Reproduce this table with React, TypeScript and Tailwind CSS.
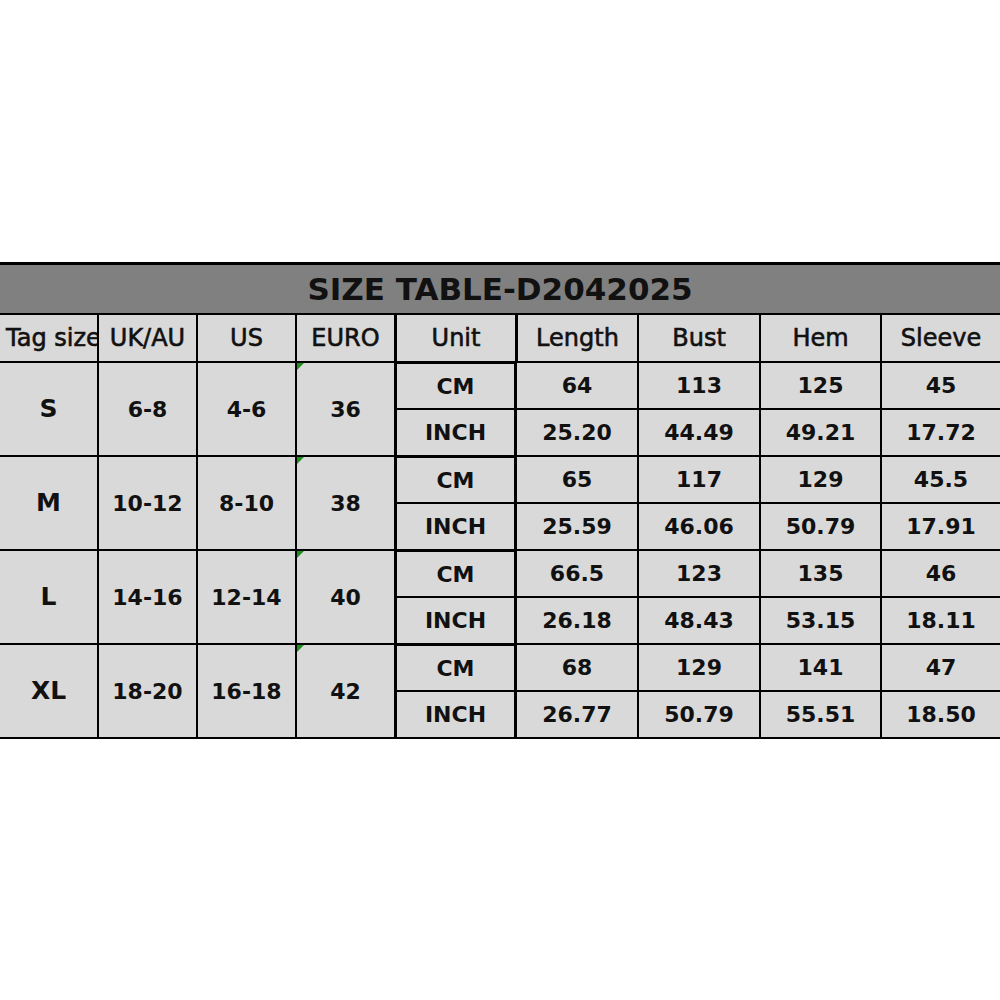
const groups = [
  { tag: "S", uk: "6-8", us: "4-6", euro: "36", cm: ["64", "113", "125", "45"], inch: ["25.20", "44.49", "49.21", "17.72"] },
  { tag: "M", uk: "10-12", us: "8-10", euro: "38", cm: ["65", "117", "129", "45.5"], inch: ["25.59", "46.06", "50.79", "17.91"] },
  { tag: "L", uk: "14-16", us: "12-14", euro: "40", cm: ["66.5", "123", "135", "46"], inch: ["26.18", "48.43", "53.15", "18.11"] },
  { tag: "XL", uk: "18-20", us: "16-18", euro: "42", cm: ["68", "129", "141", "47"], inch: ["26.77", "50.79", "55.51", "18.50"] },
]

const headers = ["UK/AU", "US", "EURO", "Unit", "Length", "Bust", "Hem", "Sleeve"]

const cell = "bg-[#d9d9d9] flex items-center justify-center text-[#111] whitespace-nowrap overflow-hidden"
const num = "font-bold text-[22px] font-['DejaVu_Sans',sans-serif]"
const head = "text-[24px] font-['DejaVu_Sans',sans-serif] [-webkit-text-stroke:0.6px_#111]"

export default function App() {
  return (
    <div className="min-h-[1000px] w-[1000px] bg-white pt-[262px]">
      <div className="grid grid-cols-[97px_97px_97px_97px_119px_120px_120px_119px_118px] grid-rows-[48px_46px_repeat(8,45px)] gap-[2px] bg-black border-t-[3px] border-b-[2px] border-black">
        {/* title bar */}
        <div className="col-span-9 bg-[#808080] flex items-center justify-center">
          <span className="font-bold text-[31px] text-[#111] font-['DejaVu_Sans',sans-serif]">SIZE TABLE-D2042025</span>
        </div>

        {/* header row */}
        <div className={`bg-[#d9d9d9] flex items-center pl-[6px] whitespace-nowrap overflow-hidden text-[#111] ${head}`}>
          Tag size
        </div>
        {headers.map((h, i) => (
          <div key={h} className={`${cell} ${head} ${i === 3 || i === 4 ? "border-l border-black" : ""}`}>
            {h}
          </div>
        ))}

        {groups.map((g) => (
          <>
            <div key={g.tag + "t"} className={`${cell} row-span-2 font-bold text-[25px] font-['DejaVu_Sans',sans-serif]`}>{g.tag}</div>
            <div key={g.tag + "u"} className={`${cell} row-span-2 ${num}`}>{g.uk}</div>
            <div key={g.tag + "s"} className={`${cell} row-span-2 ${num}`}>{g.us}</div>
            <div key={g.tag + "e"} className={`${cell} row-span-2 ${num} relative`}>
              <span className="absolute left-0 top-0 w-0 h-0 border-t-[7px] border-r-[7px] border-t-[#1e8f1e] border-r-transparent" />
              {g.euro}
            </div>
            <div key={g.tag + "cm"} className={`${cell} ${num} border-x border-t border-black`}>CM</div>
            {g.cm.map((v, i) => (
              <div key={g.tag + "c" + i} className={`${cell} ${num}`}>{v}</div>
            ))}
            <div key={g.tag + "in"} className={`${cell} ${num} border-x border-black`}>INCH</div>
            {g.inch.map((v, i) => (
              <div key={g.tag + "i" + i} className={`${cell} ${num}`}>{v}</div>
            ))}
          </>
        ))}
      </div>
    </div>
  )
}
